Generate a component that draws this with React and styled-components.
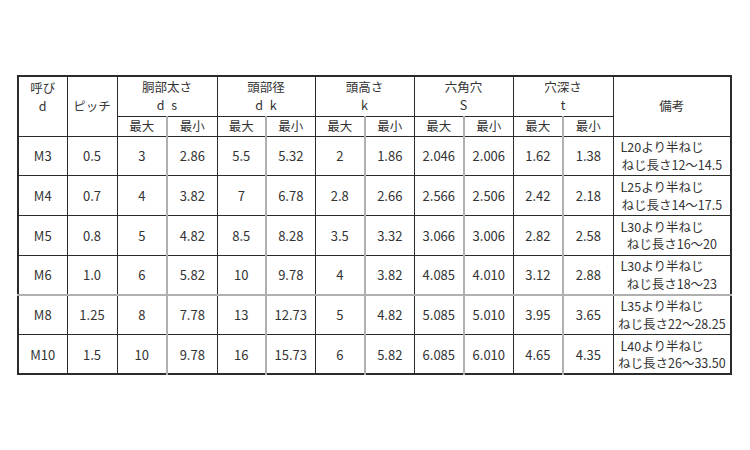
import React from 'react';
import styled, { createGlobalStyle } from 'styled-components';

const GlobalStyle = createGlobalStyle`
  html, body {
    margin: 0;
    padding: 0;
    background: #ffffff;
  }
  body {
    font-family: "Noto Sans CJK JP", "Noto Sans", sans-serif;
    color: #333333;
  }
`;

const DARK = '#2b2b2b';
const GRAY = '#b0b0b0';

const Page = styled.div`
  width: 750px;
  height: 450px;
  padding: 75px 0 0 17px;
  box-sizing: border-box;
`;

const Table = styled.table`
  border-collapse: collapse;
  table-layout: fixed;
  width: 715px;
  border: 2px solid ${DARK};
  font-size: 13px;
  line-height: 17px;
  color: #333333;
`;

const Cell = styled.td`
  padding: 0;
  font-weight: 400;
  text-align: center;
  vertical-align: ${(p) => (p.$top ? 'top' : 'middle')};
  padding-top: ${(p) => (p.$top ? '2px' : '0')};
  border: 1px solid ${DARK};
  border-right: ${(p) => (p.$grayRight ? `2px solid ${GRAY}` : `1px solid ${DARK}`)};
  border-bottom: ${(p) => (p.$grayBottom ? `2px solid ${GRAY}` : `1px solid ${DARK}`)};
  white-space: nowrap;
`;

const HeadRow = styled.tr`
  height: ${(p) => p.$h}px;
  font-size: 12.5px;
  line-height: 18px;
`;

const DataRow = styled.tr`
  height: 39.7px;
`;

const Sym = styled.span`
  display: block;
  word-spacing: 4px;
`;

const Note = styled.span`
  display: block;
  font-size: 12.5px;
  line-height: 17.5px;
  text-align: ${(p) => (p.$center ? 'center' : 'left')};
  padding-left: ${(p) => (p.$center ? '0' : '7px')};
`;

const widths = [49, 50, 50, 50, 49, 49, 50, 49, 50, 49, 50, 50, 118];

const groups = [
  ['胴部太さ', 'd s'],
  ['頭部径', 'd k'],
  ['頭高さ', 'k'],
  ['六角穴', 'S'],
  ['穴深さ', 't'],
];

const rows = [
  ['M3', '0.5', '3', '2.86', '5.5', '5.32', '2', '1.86', '2.046', '2.006', '1.62', '1.38', 'L20より半ねじ', 'ねじ長さ12～14.5'],
  ['M4', '0.7', '4', '3.82', '7', '6.78', '2.8', '2.66', '2.566', '2.506', '2.42', '2.18', 'L25より半ねじ', 'ねじ長さ14～17.5'],
  ['M5', '0.8', '5', '4.82', '8.5', '8.28', '3.5', '3.32', '3.066', '3.006', '2.82', '2.58', 'L30より半ねじ', 'ねじ長さ16～20'],
  ['M6', '1.0', '6', '5.82', '10', '9.78', '4', '3.82', '4.085', '4.010', '3.12', '2.88', 'L30より半ねじ', 'ねじ長さ18～23'],
  ['M8', '1.25', '8', '7.78', '13', '12.73', '5', '4.82', '5.085', '5.010', '3.95', '3.65', 'L35より半ねじ', 'ねじ長さ22～28.25'],
  ['M10', '1.5', '10', '9.78', '16', '15.73', '6', '5.82', '6.085', '6.010', '4.65', '4.35', 'L40より半ねじ', 'ねじ長さ26～33.50'],
];

export default function App() {
  return (
    <Page>
      <GlobalStyle />
      <Table>
        <colgroup>
          {widths.map((w, i) => (
            <col key={i} style={{ width: w }} />
          ))}
        </colgroup>
        <thead>
          <HeadRow $h={40}>
            <Cell as="th" rowSpan={2} $top>
              呼び
              <Sym>d</Sym>
            </Cell>
            <Cell as="th" rowSpan={2}>ピッチ</Cell>
            {groups.map(([jp, sym]) => (
              <Cell as="th" key={jp} colSpan={2}>
                {jp}
                <Sym>{sym}</Sym>
              </Cell>
            ))}
            <Cell as="th" rowSpan={2}>備考</Cell>
          </HeadRow>
          <HeadRow $h={20}>
            {groups.map(([jp]) => (
              <React.Fragment key={jp}>
                <Cell as="th" $grayRight>最大</Cell>
                <Cell as="th">最小</Cell>
              </React.Fragment>
            ))}
          </HeadRow>
        </thead>
        <tbody>
          {rows.map((r, ri) => {
            const gray = ri === 3;
            return (
              <DataRow key={r[0]}>
                <Cell $grayBottom={gray}>{r[0]}</Cell>
                <Cell $grayBottom={gray}>{r[1]}</Cell>
                {r.slice(2, 12).map((v, i) => (
                  <Cell key={i} $grayRight={i % 2 === 0} $grayBottom={gray}>
                    {v}
                  </Cell>
                ))}
                <Cell $grayBottom={gray}>
                  <Note>{r[12]}</Note>
                  <Note $center>{r[13]}</Note>
                </Cell>
              </DataRow>
            );
          })}
        </tbody>
      </Table>
    </Page>
  );
}
